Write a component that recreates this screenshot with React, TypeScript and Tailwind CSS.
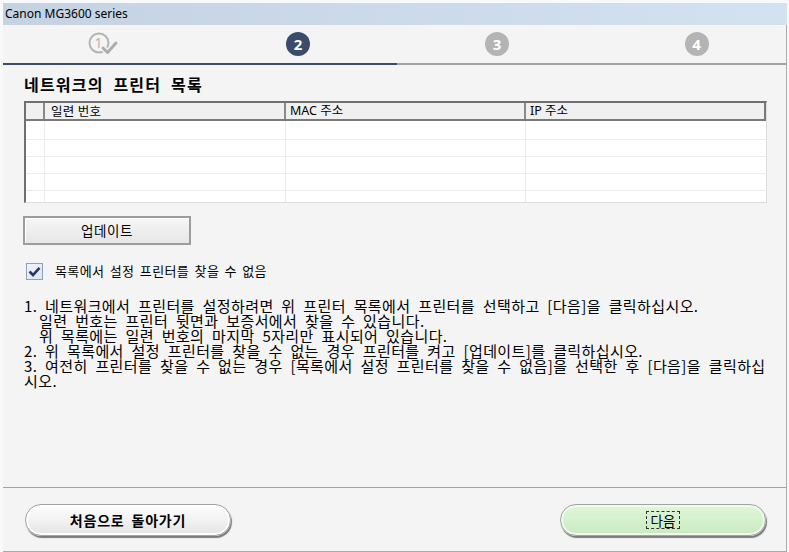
import React from "react";

const KR = '"Noto Sans CJK KR", "Noto Sans", sans-serif';

function StepDone() {
  return (
    <svg width="34" height="26" viewBox="0 0 34 26">
      <circle cx="11" cy="11" r="9.5" fill="none" stroke="#b4b4b4" strokeWidth="2" />
      <text x="10.5" y="16" textAnchor="middle" fontSize="14" fontFamily='"Noto Sans", sans-serif' fill="#b4b4b4">1</text>
      <path d="M15 16 L19.5 20.5 L28 11" fill="none" stroke="#f4f4f4" strokeWidth="6" strokeLinecap="round" strokeLinejoin="round" />
      <path d="M15 16 L19.5 20.5 L28 11" fill="none" stroke="#adadad" strokeWidth="3" strokeLinecap="round" strokeLinejoin="round" />
    </svg>
  );
}

function StepCircle({ n, active }: { n: string; active?: boolean }) {
  return (
    <div
      className={`w-[24px] h-[24px] rounded-full flex items-center justify-center text-white font-bold text-[15px] leading-none ${active ? "bg-[#3b4b6b]" : "bg-[#b4b4b4]"}`}
      style={{ fontFamily: '"Noto Sans", sans-serif' }}
    >
      {n}
    </div>
  );
}

const lines: { text: string; indent?: boolean }[] = [
  { text: "1. 네트워크에서 프린터를 설정하려면 위 프린터 목록에서 프린터를 선택하고 [다음]을 클릭하십시오." },
  { text: "일련 번호는 프린터 뒷면과 보증서에서 찾을 수 있습니다.", indent: true },
  { text: "위 목록에는 일련 번호의 마지막 5자리만 표시되어 있습니다.", indent: true },
  { text: "2. 위 목록에서 설정 프린터를 찾을 수 없는 경우 프린터를 켜고 [업데이트]를 클릭하십시오." },
  { text: "3. 여전히 프린터를 찾을 수 없는 경우 [목록에서 설정 프린터를 찾을 수 없음]을 선택한 후 [다음]을 클릭하십" },
  { text: "시오." },
];

export default function App() {
  return (
    <div className="w-[789px] h-[552px] bg-[#f9f9f9] pt-[3px] pl-[3px] pr-[2px] overflow-hidden">
      <div className="w-[784px] h-[549px] flex flex-col">
        {/* Title bar */}
        <div
          className="h-[22px] flex items-center pl-[2px] bg-gradient-to-r from-[#c4d2e2] to-[#d3e2f1] text-[12px] text-black"
          style={{ fontFamily: '"Noto Sans", "Liberation Sans", sans-serif' }}
        >
          Canon MG3600 series
        </div>

        <div className="flex-1 flex flex-col bg-[#f4f4f4] border-r border-b border-[#a9a9a9] overflow-hidden">
          {/* Steps */}
          <div className="h-[38px] flex items-center -ml-[2px]">
            <div className="w-[198px] shrink-0 flex justify-center pl-[10px] pt-[2px]">
              <StepDone />
            </div>
            <div className="w-[198px] shrink-0 flex justify-center">
              <StepCircle n="2" active />
            </div>
            <div className="w-[199px] shrink-0 flex justify-center pl-[1px]">
              <StepCircle n="3" />
            </div>
            <div className="w-[199px] shrink-0 flex justify-center pl-[2px]">
              <StepCircle n="4" />
            </div>
          </div>
          <div className="flex h-[2px]">
            <div className="w-[394px] bg-[#3b4b6b]" />
            <div className="flex-1 bg-[#a3a3a3]" />
          </div>

          {/* Content */}
          <div className="pl-[21px] flex flex-col" style={{ fontFamily: KR }}>
            <div className="mt-[10px] h-[18px] leading-[18px] text-[16px] font-bold text-black tracking-[1.2px] [word-spacing:5px]">
              네트워크의 프린터 목록
            </div>

            {/* Table */}
            <div className="mt-[8px] w-[743px] h-[102px] bg-white border-t-2 border-l-2 border-[#707070] border-r border-b border-r-[#dcdcdc] border-b-[#dcdcdc] overflow-hidden">
              <div className="h-[18px] flex bg-[#f0f0f0] border-b-2 border-[#7a7a7a] text-[12.5px] leading-[16px] text-black">
                <div className="w-[19px] border-r-2 border-[#8a8a8a]" />
                <div className="w-[241px] border-r-2 border-[#8a8a8a] pl-[6px] tracking-[0.3px]">일련 번호</div>
                <div className="w-[240px] border-r-2 border-[#8a8a8a] pl-[4px]" style={{ fontFamily: '"Noto Sans", "Noto Sans CJK KR", sans-serif' }}>
                  MAC 주소
                </div>
                <div className="flex-1 border-r-2 border-[#7a7a7a] pl-[4px]" style={{ fontFamily: '"Noto Sans", "Noto Sans CJK KR", sans-serif' }}>
                  IP 주소
                </div>
              </div>
              {[19, 17, 17, 17, 17].map((h, i) => (
                <div key={i} className="flex border-b border-[#ededed]" style={{ height: h }}>
                  <div className="w-[19px] border-r border-[#ececec]" />
                  <div className="w-[241px] border-r border-[#ececec]" />
                  <div className="w-[240px] border-r border-[#ececec]" />
                  <div className="flex-1" />
                </div>
              ))}
            </div>

            {/* Update button */}
            <div className="mt-[13px] -ml-[1px] w-[168px] h-[29px] border-2 border-[#9c9c9c] bg-gradient-to-b from-[#f6f6f6] to-[#e6e6e6] flex items-center justify-center text-[13.5px] tracking-[0.6px] text-black shadow-[inset_1px_1px_0_#ffffff]">
              업데이트
            </div>

            {/* Checkbox */}
            <div className="mt-[17px] flex items-center h-[18px]">
              <div className="ml-[2px] w-[17px] h-[17px] border border-[#8e9fba] bg-gradient-to-br from-[#eef3fb] to-[#dde6f3] flex items-center justify-center">
                <svg width="13" height="11" viewBox="0 0 13 11">
                  <path d="M1.5 5.5 L5 9 L11.5 1.8" fill="none" stroke="#243a63" strokeWidth="2.6" strokeLinejoin="miter" />
                </svg>
              </div>
              <span className="ml-[12px] text-[13px] text-black tracking-[0.4px] [word-spacing:2px]">목록에서 설정 프린터를 찾을 수 없음</span>
            </div>

            {/* Instructions */}
            <div className="mt-[18px] text-[15px] leading-[15px] text-black tracking-[0.4px] [word-spacing:4px]">
              {lines.map((l, i) => (
                <div key={i} className={`whitespace-nowrap h-[15px] ${l.indent ? "pl-[15px]" : ""}`}>
                  {l.text}
                </div>
              ))}
            </div>
          </div>

          <div className="flex-1" />

          {/* Footer */}
          <div className="h-[64px] shrink-0 border-t border-[#a3a3a3] flex items-start justify-between pl-[22px] pr-[20px] pt-[16px]" style={{ fontFamily: KR }}>
            <div className="w-[206px] h-[32px] rounded-full border border-[#a2a2a2] bg-gradient-to-b from-[#fdfdfd] via-[#f2f2f2] to-[#e4e4e4] shadow-[1px_2px_1px_rgba(0,0,0,0.5),inset_0_0_0_2px_#ffffff] flex items-center justify-center text-[14px] font-bold text-black tracking-[0.8px] [word-spacing:3px]">
              처음으로 돌아가기
            </div>
            <div className="w-[206px] h-[32px] rounded-full border border-[#a2a2a2] bg-gradient-to-b from-[#e0f6da] via-[#d4f1cc] to-[#c9ebc0] shadow-[1px_2px_1px_rgba(0,0,0,0.5),inset_0_0_0_2px_#f0fbee] flex items-center justify-center text-[13.5px] text-black">
              <span className="border border-dashed border-[#333333] px-[4px] leading-[16px]">다음</span>
            </div>
          </div>
        </div>
      </div>
    </div>
  );
}
